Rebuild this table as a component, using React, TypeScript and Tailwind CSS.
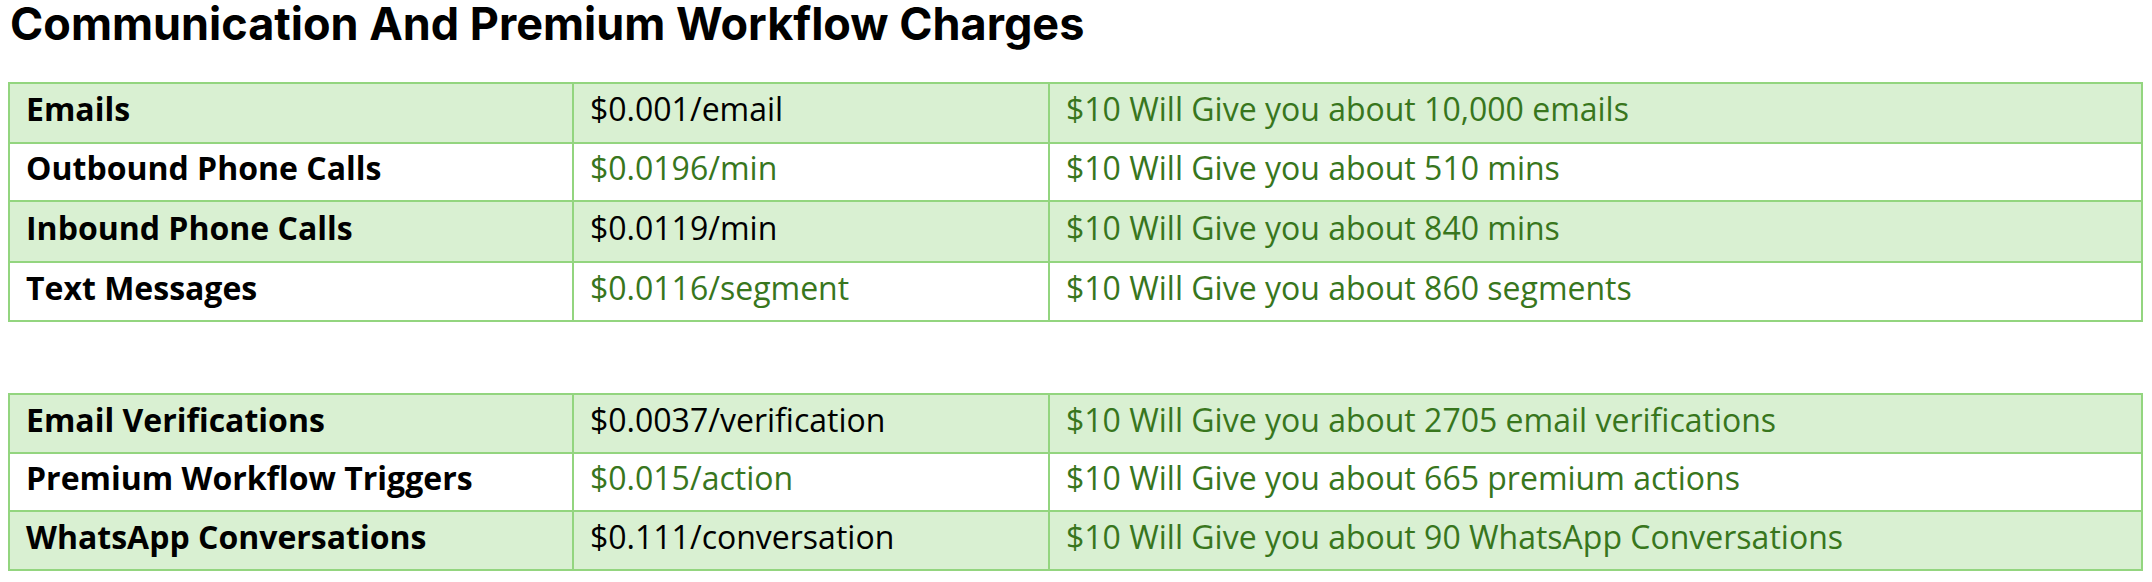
type Row = { name: string; rate: string; note: string; h: string };

const usage: Row[] = [
  { name: "Emails", rate: "$0.001/email", note: "$10 Will Give you about 10,000 emails", h: "h-[60px]" },
  { name: "Outbound Phone Calls", rate: "$0.0196/min", note: "$10 Will Give you about 510 mins", h: "h-[58px]" },
  { name: "Inbound Phone Calls", rate: "$0.0119/min", note: "$10 Will Give you about 840 mins", h: "h-[61px]" },
  { name: "Text Messages", rate: "$0.0116/segment", note: "$10 Will Give you about 860 segments", h: "h-[59px]" },
];

const premium: Row[] = [
  { name: "Email Verifications", rate: "$0.0037/verification", note: "$10 Will Give you about 2705 email verifications", h: "h-[59px]" },
  { name: "Premium Workflow Triggers", rate: "$0.015/action", note: "$10 Will Give you about 665 premium actions", h: "h-[58px]" },
  { name: "WhatsApp Conversations", rate: "$0.111/conversation", note: "$10 Will Give you about 90 WhatsApp Conversations", h: "h-[59px]" },
];

function ChargeTable({ rows }: { rows: Row[] }) {
  return (
    <div className="ml-[8px] grid w-[2135px] grid-cols-[564px_476px_1093px] border-l-2 border-t-2 border-[#93d57f]">
      {rows.map((r, i) => {
        const shaded = i % 2 === 0;
        const bg = shaded ? "bg-[#d9f0d2]" : "bg-white";
        const cell = `flex items-center border-b-2 border-r-2 border-[#93d57f] pb-2 pl-4 ${bg} ${r.h}`;
        return (
          <div key={r.name} className="contents">
            <div className={`${cell} font-bold text-black`}>{r.name}</div>
            <div className={`${cell} ${shaded ? "text-black" : "text-[#38761d]"}`}>{r.rate}</div>
            <div className={`${cell} text-[#38761d]`}>{r.note}</div>
          </div>
        );
      })}
    </div>
  );
}

export default function App() {
  return (
    <div className="bg-white font-['Open_Sans',sans-serif] text-[32px] leading-none">
      <h1 className="pl-[10px] font-['Inter',sans-serif] text-[45px] font-bold leading-[48px] text-black">
        Communication And Premium Workflow Charges
      </h1>
      <div className="mt-[34px]">
        <ChargeTable rows={usage} />
      </div>
      <div className="mt-[71px]">
        <ChargeTable rows={premium} />
      </div>
    </div>
  );
}
